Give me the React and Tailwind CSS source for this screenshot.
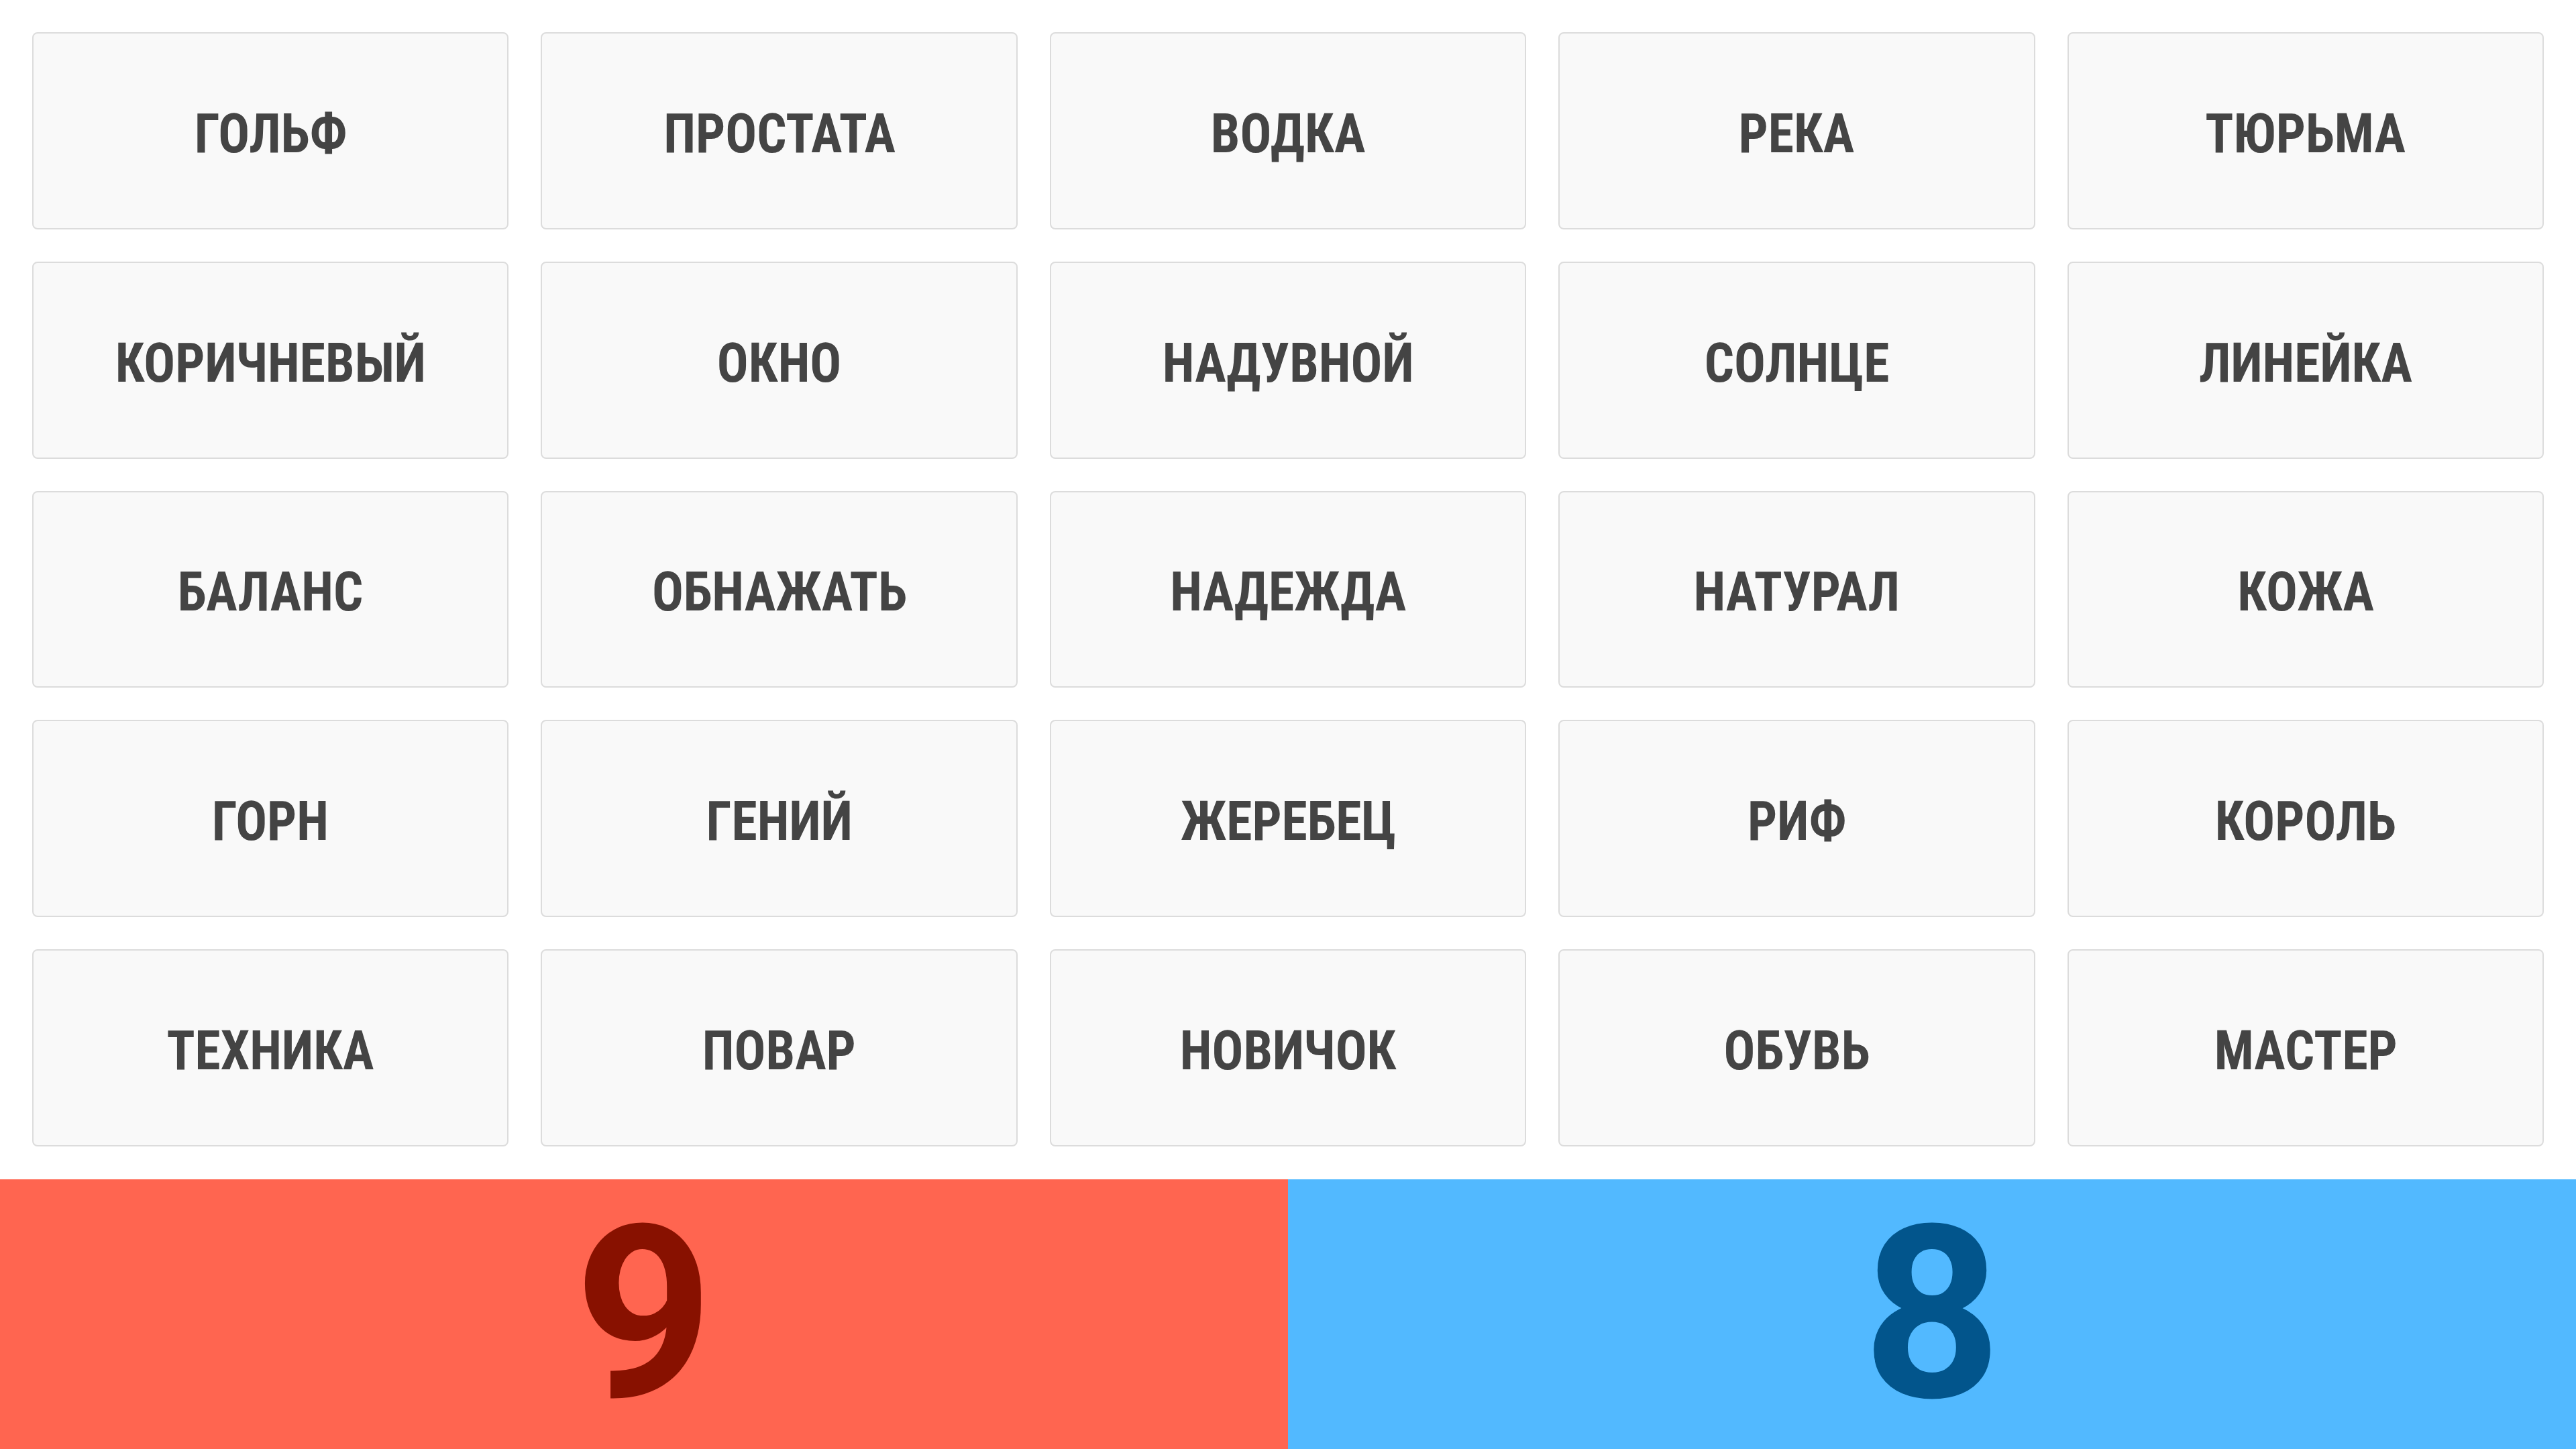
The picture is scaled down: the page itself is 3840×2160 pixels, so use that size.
import React from "react";

const words = [
  "ГОЛЬФ", "ПРОСТАТА", "ВОДКА", "РЕКА", "ТЮРЬМА",
  "КОРИЧНЕВЫЙ", "ОКНО", "НАДУВНОЙ", "СОЛНЦЕ", "ЛИНЕЙКА",
  "БАЛАНС", "ОБНАЖАТЬ", "НАДЕЖДА", "НАТУРАЛ", "КОЖА",
  "ГОРН", "ГЕНИЙ", "ЖЕРЕБЕЦ", "РИФ", "КОРОЛЬ",
  "ТЕХНИКА", "ПОВАР", "НОВИЧОК", "ОБУВЬ", "МАСТЕР",
];

export default function App() {
  return (
    <div className="w-[3840px] h-[2160px] bg-white flex flex-col font-['Roboto',sans-serif] overflow-hidden">
      <div className="shrink-0 h-[1758px] grid grid-cols-5 grid-rows-5 gap-[48px] p-[48px] pb-[49px]">
        {words.map((w) => (
          <div
            key={w}
            className="flex items-center justify-center bg-[#f9f9f9] border-2 border-[#dcdcdc] rounded-[8px]"
          >
            <span className="inline-block font-['Roboto_Condensed','Roboto',sans-serif] text-[81px] font-bold text-[#444444] leading-none scale-x-[0.96] mt-[9px] whitespace-nowrap">
              {w}
            </span>
          </div>
        ))}
      </div>
      <div className="h-[402px] shrink-0 flex overflow-hidden">
        <div className="flex-1 bg-[#ff6550] flex items-center justify-center">
          <span className="text-[360px] font-bold text-[#881100] leading-[1.1]">9</span>
        </div>
        <div className="flex-1 bg-[#52b9ff] flex items-center justify-center">
          <span className="text-[360px] font-bold text-[#02558c] leading-[1.1]">8</span>
        </div>
      </div>
    </div>
  );
}
